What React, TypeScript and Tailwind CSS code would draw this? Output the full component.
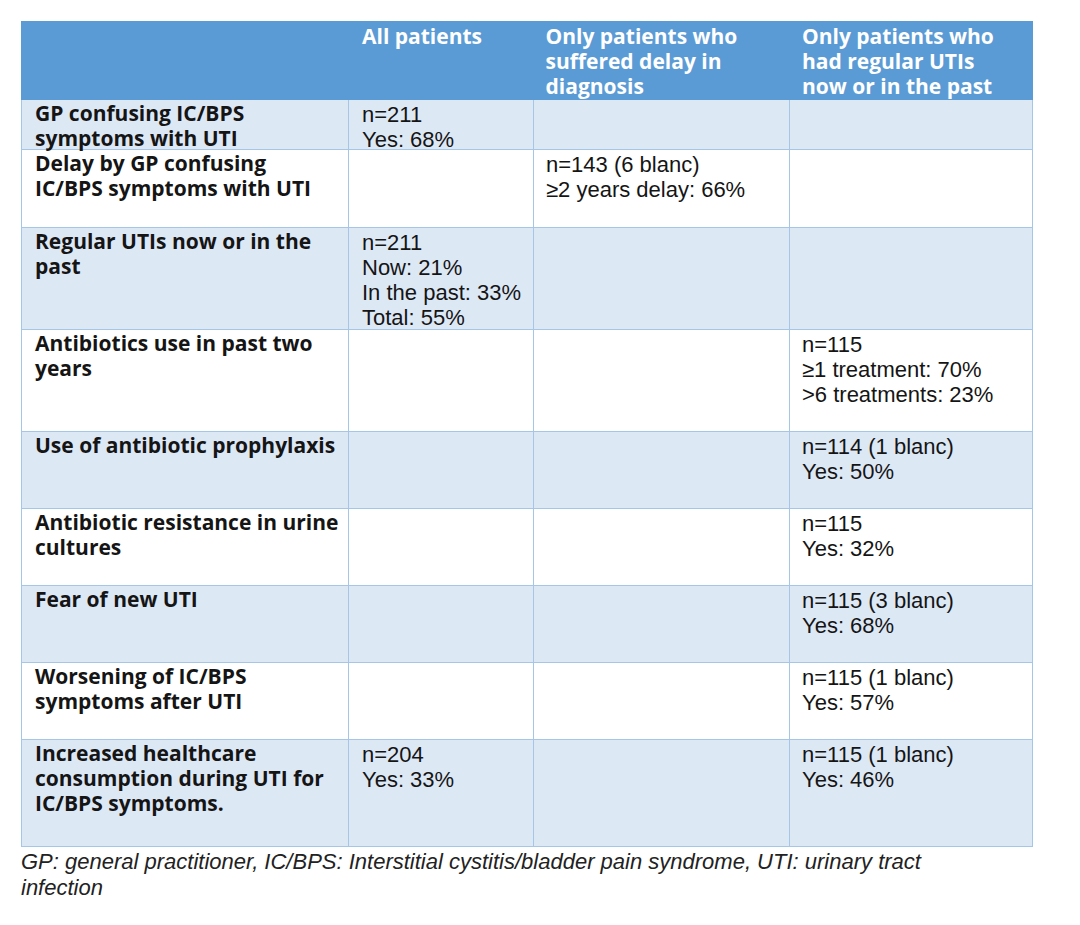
import React from "react";

type Row = {
  label: string[];
  all?: string[];
  delay?: string[];
  uti?: string[];
  h: string;
  shade: boolean;
};

const rows: Row[] = [
  { label: ["GP confusing IC/BPS", "symptoms with UTI"], all: ["n=211", "Yes: 68%"], h: "h-[50px]", shade: true },
  { label: ["Delay by GP confusing", "IC/BPS symptoms with UTI"], delay: ["n=143 (6 blanc)", "≥2 years delay: 66%"], h: "h-[78px]", shade: false },
  { label: ["Regular UTIs now or in the", "past"], all: ["n=211", "Now: 21%", "In the past: 33%", "Total: 55%"], h: "h-[102px]", shade: true },
  { label: ["Antibiotics use in past two", "years"], uti: ["n=115", "≥1 treatment: 70%", ">6 treatments: 23%"], h: "h-[102px]", shade: false },
  { label: ["Use of antibiotic prophylaxis"], uti: ["n=114 (1 blanc)", "Yes: 50%"], h: "h-[77px]", shade: true },
  { label: ["Antibiotic resistance in urine", "cultures"], uti: ["n=115", "Yes: 32%"], h: "h-[77px]", shade: false },
  { label: ["Fear of new UTI"], uti: ["n=115 (3 blanc)", "Yes: 68%"], h: "h-[77px]", shade: true },
  { label: ["Worsening of IC/BPS", "symptoms after UTI"], uti: ["n=115 (1 blanc)", "Yes: 57%"], h: "h-[77px]", shade: false },
  { label: ["Increased healthcare", "consumption during UTI for", "IC/BPS symptoms."], all: ["n=204", "Yes: 33%"], uti: ["n=115 (1 blanc)", "Yes: 46%"], h: "h-[107px]", shade: true },
];

// negative bottom margin keeps the padded text from stretching the fixed row heights
function Lines({ items }: { items?: string[] }) {
  if (!items) return null;
  return (
    <div className="-mb-[8px]">
      {items.map((t, i) => (
        <div key={i} className="whitespace-nowrap">{t}</div>
      ))}
    </div>
  );
}

const bold = "font-['Open_Sans','Liberation_Sans',sans-serif] font-bold text-[21px]";
const plain = "font-['Liberation_Sans',Arial,sans-serif] text-[22px]";

export default function App() {
  return (
    <div className="w-[1080px] h-[925px] bg-white pt-[21px] pl-[21px]">
      <table className="border-collapse table-fixed w-[1011px] leading-[25px] text-[#151515]">
        <colgroup>
          <col className="w-[327px]" />
          <col className="w-[185px]" />
          <col className="w-[256px]" />
          <col className="w-[243px]" />
        </colgroup>
        <thead>
          <tr className={`h-[77px] bg-[#5b9bd5] text-white ${bold}`}>
            <th className="border border-[#5b9bd5] align-top"></th>
            <th className="border-y border-[#5b9bd5] align-top text-left font-bold pl-[13px] pt-[2px]">All patients</th>
            <th className="border-y border-[#5b9bd5] align-top text-left font-bold pl-[12px] pt-[2px]">
              Only patients who
              <br />
              suffered delay in
              <br />
              diagnosis
            </th>
            <th className="border border-[#5b9bd5] align-top text-left font-bold pl-[12px] pt-[2px]">
              Only patients who
              <br />
              had regular UTIs
              <br />
              now or in the past
            </th>
          </tr>
        </thead>
        <tbody>
          {rows.map((r, i) => (
            <tr key={i} className={`${r.h} ${r.shade ? "bg-[#dde8f5]" : "bg-white"}`}>
              <td className={`border border-[#a6c6e7] align-top pl-[13px] pt-[1px] ${bold}`}>
                <Lines items={r.label} />
              </td>
              <td className={`border border-[#a6c6e7] align-top pl-[13px] pt-[2px] ${plain}`}>
                <Lines items={r.all} />
              </td>
              <td className={`border border-[#a6c6e7] align-top pl-[12px] pt-[2px] ${plain}`}>
                <Lines items={r.delay} />
              </td>
              <td className={`border border-[#a6c6e7] align-top pl-[12px] pt-[2px] ${plain}`}>
                <Lines items={r.uti} />
              </td>
            </tr>
          ))}
        </tbody>
      </table>
      <p className={`mt-[2px] italic leading-[26px] text-[#222] ${plain}`}>
        GP: general practitioner, IC/BPS: Interstitial cystitis/bladder pain syndrome, UTI: urinary tract
        <br />
        infection
      </p>
    </div>
  );
}
